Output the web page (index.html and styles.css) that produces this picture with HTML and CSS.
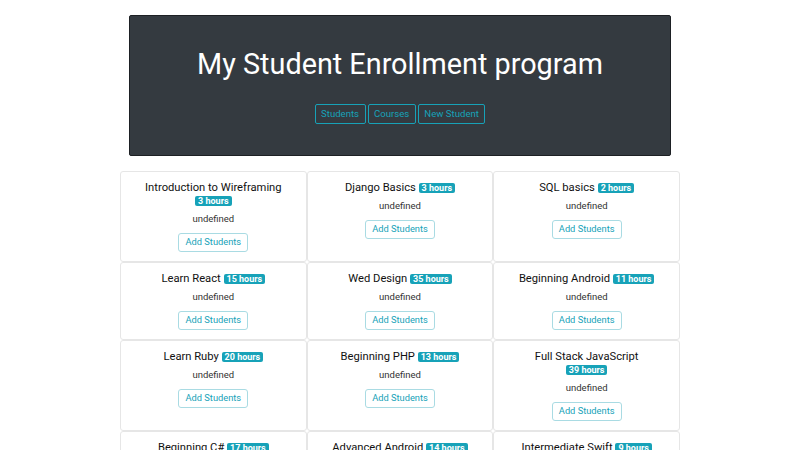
FILE: index.html
```html
<!DOCTYPE html>
<html>
<head>
<meta charset="utf-8">
<link rel="stylesheet" href="styles.css">
</head>
<body>
<div class="container">
  <header class="jumbo">
    <h1 class="title">My Student Enrollment program</h1>
    <nav class="nav">
      <a class="nav-btn">Students</a>
      <a class="nav-btn">Courses</a>
      <a class="nav-btn">New Student</a>
    </nav>
  </header>
  <main class="grid">
    <div class="card"><div class="card-title">Introduction to Wireframing <span class="badge">3 hours</span></div><p class="desc">undefined</p><a class="add-btn">Add Students</a></div>
    <div class="card"><div class="card-title">Django Basics <span class="badge">3 hours</span></div><p class="desc">undefined</p><a class="add-btn">Add Students</a></div>
    <div class="card"><div class="card-title">SQL basics <span class="badge">2 hours</span></div><p class="desc">undefined</p><a class="add-btn">Add Students</a></div>
    <div class="card"><div class="card-title">Learn React <span class="badge">15 hours</span></div><p class="desc">undefined</p><a class="add-btn">Add Students</a></div>
    <div class="card"><div class="card-title">Wed Design <span class="badge">35 hours</span></div><p class="desc">undefined</p><a class="add-btn">Add Students</a></div>
    <div class="card"><div class="card-title">Beginning Android <span class="badge">11 hours</span></div><p class="desc">undefined</p><a class="add-btn">Add Students</a></div>
    <div class="card"><div class="card-title">Learn Ruby <span class="badge">20 hours</span></div><p class="desc">undefined</p><a class="add-btn">Add Students</a></div>
    <div class="card"><div class="card-title">Beginning PHP <span class="badge">13 hours</span></div><p class="desc">undefined</p><a class="add-btn">Add Students</a></div>
    <div class="card"><div class="card-title">Full Stack JavaScript <span class="badge">39 hours</span></div><p class="desc">undefined</p><a class="add-btn">Add Students</a></div>
    <div class="card"><div class="card-title">Beginning C# <span class="badge">17 hours</span></div><p class="desc">undefined</p><a class="add-btn">Add Students</a></div>
    <div class="card"><div class="card-title">Advanced Android <span class="badge">14 hours</span></div><p class="desc">undefined</p><a class="add-btn">Add Students</a></div>
    <div class="card"><div class="card-title">Intermediate Swift <span class="badge">9 hours</span></div><p class="desc">undefined</p><a class="add-btn">Add Students</a></div>
  </main>
</div>
</body>
</html>
```
FILE: styles.css
```css
html, body {
  margin: 0;
  padding: 0;
  background: #fff;
  font-family: Roboto, "Liberation Sans", sans-serif;
  color: #212529;
}
.container {
  width: 560px;
  margin: 0 auto;
  padding-top: 15px;
}
.jumbo {
  margin: 0 9px 15px;
  height: 141px;
  box-sizing: border-box;
  background: #343a40;
  border: 1px solid #1d2024;
  border-radius: 2px;
  display: flex;
  flex-direction: column;
  align-items: center;
  padding-top: 29px;
}
.title {
  margin: 0;
  font-weight: 400;
  font-size: 28.8px;
  line-height: 38px;
  color: #fff;
}
.nav {
  display: flex;
  gap: 2px;
  margin-top: 21px;
}
.nav-btn {
  display: block;
  height: 20px;
  box-sizing: border-box;
  border: 1px solid #17a2b8;
  border-radius: 2px;
  padding: 0 5.5px;
  font-size: 9.6px;
  line-height: 18px;
  color: #17a2b8;
}
.grid {
  display: grid;
  grid-template-columns: repeat(3, 1fr);
}
.card {
  border: 1px solid #e6e6e6;
  border-radius: 3px;
  text-align: center;
  padding: 9px 6px 9.5px;
  display: flex;
  flex-direction: column;
  align-items: center;
}
.card-title {
  font-size: 11.2px;
  line-height: 13px;
  color: #111;
  max-width: 140px;
}
.badge {
  display: inline-block;
  background: #17a2b8;
  color: #fff;
  font-weight: 700;
  font-size: 9px;
  line-height: 10px;
  padding: 0 3px;
  border-radius: 2px;
  vertical-align: 0;
}
.desc {
  margin: 5px 0 8px;
  font-size: 9.5px;
  line-height: 13px;
  color: #333;
}
.add-btn {
  display: block;
  height: 18.5px;
  box-sizing: border-box;
  border: 1px solid #a9dbe3;
  border-radius: 3px;
  padding: 0 6px;
  font-size: 9.3px;
  line-height: 16.5px;
  color: #17a2b8;
}
```
